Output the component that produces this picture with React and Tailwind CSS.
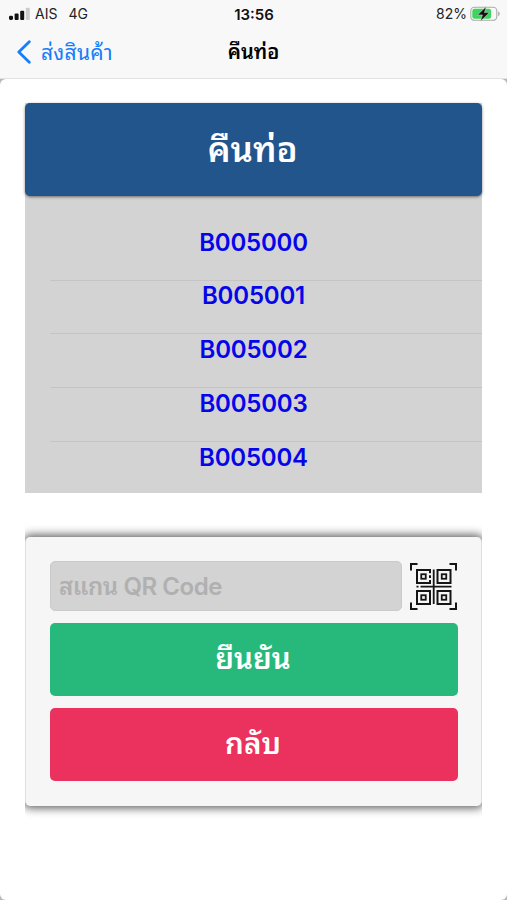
import React, { useState } from "react";

const FONT = "font-['Inter','Noto_Sans_Thai_Looped','Noto_Looped_Thai','Loma','Garuda','Waree','Noto_Sans_Thai','Noto_Sans',sans-serif]";

const pipes = ["B005000", "B005001", "B005002", "B005003", "B005004"];

function StatusBar() {
  return (
    <div className="grid h-7 grid-cols-3 items-center pl-[9px] pr-[7px] text-[14px] leading-none text-[#222]">
      <div className="flex items-center">
        <svg width="21" height="14" viewBox="0 0 21 14" className="shrink-0">
          <rect x="0" y="8.7" width="4" height="4.3" rx="1.4" fill="#111" />
          <rect x="5.6" y="6.5" width="4" height="6.5" rx="1" fill="#111" />
          <rect x="11.2" y="3.8" width="4" height="9.2" rx="1" fill="#111" />
          <rect x="16.8" y="0.8" width="4" height="12.2" rx="1" fill="#ccc" />
        </svg>
        <span className="ml-[5px]">AIS</span>
        <span className="ml-[11px]">4G</span>
      </div>
      <div className="pr-[1px] text-center text-[15px] font-semibold text-[#111]">13:56</div>
      <div className="flex items-center justify-end gap-[3px]">
        <span>82%</span>
        <svg width="30" height="16" viewBox="0 0 30 16" className="shrink-0">
          <rect x="0.8" y="1.3" width="26" height="13" rx="3.6" fill="#f8f8f8" stroke="#aaa" strokeWidth="1.1" />
          <rect x="2.3" y="2.8" width="18.8" height="10" rx="2.2" fill="#3fd45e" />
          <path d="M28.2 5.3v5c2-.8 2-4.2 0-5z" fill="#aaa" />
          <path d="M16.3.6 7.6 8.9h4.9L10.4 15.2l9-8.6h-5z" fill="#111" stroke="#f8f8f8" strokeWidth=".4" />
        </svg>
      </div>
    </div>
  );
}

function NavBar() {
  return (
    <div className="grid h-[48px] grid-cols-3 items-center">
      <button className="flex items-center pl-[16px] text-[#147efb]">
        <svg width="16" height="24" viewBox="0 0 16 24" fill="none" className="shrink-0">
          <path d="M13.3 1.8 2.8 12l10.5 10.2" stroke="currentColor" strokeWidth="2.8" strokeLinecap="round" strokeLinejoin="round" />
        </svg>
        <span className="ml-[9px] whitespace-nowrap text-[21px] leading-none tracking-[0.3px]">ส่งสินค้า</span>
      </button>
      <div className="text-center text-[20px] font-semibold leading-none text-black">คืนท่อ</div>
    </div>
  );
}

function QrFinder({ x, y }) {
  return (
    <g transform={`translate(${x} ${y})`}>
      <rect x="1" y="1" width="13" height="13" strokeWidth="2" />
      <rect x="5.25" y="5.25" width="4.5" height="4.5" strokeWidth="1.8" />
    </g>
  );
}

function QrIcon() {
  return (
    <svg width="47" height="47" viewBox="0 0 47 47" fill="none" stroke="#151515" className="shrink-0">
      <path d="M1 7.5V1h6.5M39.5 1H46v6.5M46 39.5V46h-6.5M7.5 46H1v-6.5" strokeWidth="2" />
      <QrFinder x="6" y="6" />
      <QrFinder x="26.5" y="6" />
      <QrFinder x="6" y="27" />
      <QrFinder x="26.5" y="27" />
      <path d="M23.7 6.5V41M10.5 23.7H41.5M6.5 23.7h2" strokeWidth="1.8" />
      {/* broken edge of the first square */}
      <path d="M20 10.2v2M20 15v2" stroke="#f6f6f6" strokeWidth="3" />
    </svg>
  );
}

export default function App() {
  const [code, setCode] = useState("");

  return (
    <div className={`flex h-[900px] w-[507px] flex-col overflow-hidden bg-[#b8b8b8] ${FONT}`}>
      <header className="h-[79px] shrink-0 border-b border-[#e2e2e2] bg-[#f8f8f8]">
        <StatusBar />
        <NavBar />
      </header>

      <main className="flex-1 rounded-[6px] bg-white px-[25px] pt-[24px]">
        <section className="h-[390px] w-[457px] bg-[#d3d3d3]">
          <h1 className="flex h-[93px] items-center justify-center rounded-[5px] bg-[#21558c] pr-[2px] pb-[1px] text-[35px] font-semibold leading-none text-white shadow-[0_1px_3px_rgba(0,0,0,0.5)]">
            คืนท่อ
          </h1>
          <ul className="pt-[31.6px]">
            {pipes.map((pipe, i) => (
              <li key={pipe} className="h-[53.8px]">
                <div className="flex h-[30px] items-center justify-center text-[24px] font-semibold tracking-[-0.2px] text-[#0505ea]">
                  {pipe}
                </div>
                {i < pipes.length - 1 && <div className="ml-[25px] mt-[22px] h-px bg-[#c4c4c4]" />}
              </li>
            ))}
          </ul>
        </section>

        {/* Scan form, the shadow is clipped at the card's sides */}
        <div className="mt-[24px] w-[457px] overflow-hidden py-[20px]">
          <section className="flex h-[269px] flex-col rounded-[5px] border-x border-[#dedede] bg-[#f6f6f6] pl-[24px] pr-[23px] pt-[24px] shadow-[0_0_10px_2px_rgba(0,0,0,0.65)]">
            <div className="flex items-center gap-[8px]">
              <input
                value={code}
                onChange={(e) => setCode(e.target.value)}
                placeholder="สแกน QR Code"
                className="h-[50px] w-[352px] rounded-[5px] border border-[#cacaca] bg-[#d3d3d3] px-[8px] text-[24px] font-semibold tracking-[-0.45px] text-[#333] outline-none placeholder:text-[#b0b0b0]"
              />
              <QrIcon />
            </div>
            <button className="mt-[12px] flex h-[73px] shrink-0 items-center justify-center rounded-[5px] bg-[#27b97c] pb-[2px] pr-[2px] text-[29.5px] font-semibold leading-none text-white">
              ยืนยัน
            </button>
            <button className="mt-[12px] flex h-[73px] shrink-0 items-center justify-center rounded-[5px] bg-[#eb325e] pb-[2px] pr-[2px] text-[29.5px] font-semibold leading-none text-white">
              กลับ
            </button>
          </section>
        </div>
      </main>
    </div>
  );
}
